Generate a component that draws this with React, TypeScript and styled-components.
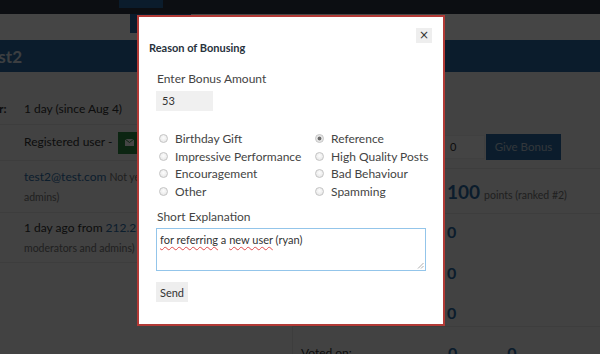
import React from "react";
import styled, { createGlobalStyle } from "styled-components";

const GlobalStyle = createGlobalStyle`
  html, body {
    margin: 0;
    padding: 0;
    width: 600px;
    height: 354px;
    overflow: hidden;
    background: #f2f2f2;
    font-family: Lato, "Open Sans", "DejaVu Sans", sans-serif;
    color: #333;
  }
`;

const Page = styled.div`
  width: 600px;
  height: 354px;
  overflow: hidden;
  background: #f2f2f2;
`;

/* ---------- background page ---------- */

const TopNav = styled.div`
  height: 14px;
  background: #2c3644;
  display: flex;
  align-items: flex-start;
  padding-left: 119px;
`;

const NavTab = styled.div`
  width: 44px;
  height: 8px;
  background: #2a6aa3;
`;

const SubBar = styled.div`
  height: 26px;
  background: #fff;
  display: flex;
  align-items: flex-start;
  padding-left: 130px;
`;

const SubButton = styled.div`
  width: 61px;
  height: 19px;
  background: #2a6aa3;
`;

const Banner = styled.div`
  height: 32px;
  background: #2a6aa3;
  display: flex;
  align-items: center;
  overflow: hidden;
`;

const BannerTitle = styled.h1`
  margin: 0 0 0 -17px;
  font-size: 17px;
  font-weight: 700;
  color: #dde5ee;
  white-space: nowrap;
`;

const Content = styled.div`
  display: grid;
  grid-template-columns: 292px 308px;
  padding-top: 20px;
`;

const LeftCol = styled.div`
  display: flex;
  flex-direction: column;
`;

const RightCol = styled.div`
  display: flex;
  flex-direction: column;
  padding-top: 33px;
`;

const InfoRow = styled.div<{ $h: number }>`
  display: grid;
  grid-template-columns: 6px 1fr;
  column-gap: 18px;
  align-items: center;
  height: ${(p) => p.$h}px;
  box-sizing: border-box;
  border-bottom: 1px solid #e2e2e2;
  font-size: 12px;
  color: #333;
`;

const InfoLabel = styled.div`
  margin-left: -60px;
  width: 66px;
  white-space: nowrap;
  font-weight: 700;
`;

const InfoValue = styled.div`
  line-height: 19px;
  padding-right: 10px;
  white-space: nowrap;
`;

const Small = styled.span`
  font-size: 10.5px;
  color: #777;
`;

const Link = styled.span`
  color: #2f6fa8;
`;

const MailButton = styled.span`
  display: inline-flex;
  align-items: center;
  gap: 5px;
  vertical-align: middle;
  margin-left: 5px;
  padding: 0 7px;
  height: 22px;
  background: #2e8a43;
  color: #fff;
  font-size: 11px;
`;

const StatRow = styled.div<{ $h: number; $pad?: number; $line?: boolean }>`
  display: grid;
  grid-template-columns: 155px auto auto 1fr;
  align-items: ${(p) => (p.$pad !== undefined ? "start" : "center")};
  padding-top: ${(p) => p.$pad ?? 0}px;
  height: ${(p) => p.$h}px;
  box-sizing: border-box;
  border-bottom: 1px solid ${(p) => (p.$line ? "#e0e0e0" : "transparent")};
  font-size: 12px;
  line-height: 20px;
`;

const StatLabel = styled.div`
  padding-left: 8px;
  color: #333;
`;

const StatNum = styled.span<{ $big?: boolean }>`
  font-size: ${(p) => (p.$big ? 19 : 16)}px;
  font-weight: 700;
  color: #2a6aa3;
  margin-right: 4px;
`;

const BonusInput = styled.div`
  margin-left: -8px;
  width: 46px;
  height: 24px;
  background: #fafafa;
  border: 1px solid #ececec;
  box-sizing: border-box;
  font-size: 11px;
  line-height: 22px;
  padding-left: 10px;
  margin-right: 1px;
`;

const GiveButton = styled.div`
  width: 75px;
  height: 26px;
  background: #2a6aa3;
  color: #b8c8d8;
  font-size: 11.5px;
  display: flex;
  align-items: center;
  justify-content: center;
`;

const BottomStats = styled.div`
  border-left: 1px solid #e0e0e0;
`;

const StatPair = styled.div`
  display: flex;
  gap: 46px;
`;

/* ---------- modal ---------- */

const Overlay = styled.div`
  position: fixed;
  inset: 0;
  background: rgba(0, 0, 0, 0.73);
`;

const Modal = styled.div`
  position: fixed;
  left: 137px;
  top: 15px;
  width: 308px;
  height: 311px;
  box-sizing: border-box;
  background: #fff;
  border: 2px solid #b23a36;
`;

const ModalHeader = styled.div`
  position: relative;
  padding: 24px 12px 0 10px;
`;

const ModalTitle = styled.h4`
  margin: 0;
  font-size: 11px;
  line-height: 14px;
  font-weight: 700;
  color: #28323d;
`;

const CloseButton = styled.button`
  position: absolute;
  top: 11px;
  right: 11px;
  width: 16px;
  height: 15px;
  padding: 0;
  border: none;
  background: #eee;
  color: #333;
  font-size: 12px;
  line-height: 15px;
  font-family: "DejaVu Sans", sans-serif;
  cursor: pointer;
`;

const ModalBody = styled.div`
  padding: 16px 17px 0 17px;
  display: flex;
  flex-direction: column;
  align-items: flex-start;
`;

const FieldLabel = styled.label`
  font-size: 12px;
  line-height: 16px;
  color: #444;
  padding-left: 1px;
`;

const AmountInput = styled.div`
  margin-top: 4px;
  width: 57px;
  height: 20px;
  box-sizing: border-box;
  background: #f0f0f0;
  font-size: 11px;
  line-height: 20px;
  padding-left: 6px;
  color: #333;
`;

const RadioGrid = styled.div`
  margin-top: 19px;
  display: grid;
  grid-template-columns: 156px auto;
  grid-auto-flow: column;
  grid-template-rows: repeat(4, 17.6px);
`;

const RadioItem = styled.label`
  display: flex;
  align-items: center;
  gap: 7px;
  padding-left: 3px;
  font-size: 12px;
  color: #444;
  white-space: nowrap;
`;

const Radio = styled.input`
  appearance: none;
  margin: 0;
  width: 9px;
  height: 9px;
  border-radius: 50%;
  border: 1px solid #c4c4c4;
  background: radial-gradient(circle at 50% 40%, #fdfdfd, #e2e2e2);
  box-sizing: border-box;

  &:checked {
    background: radial-gradient(circle, #6a6a6a 0 1.6px, #dcdcdc 2.2px, #f4f4f4 4px);
  }
`;

const ExplainLabel = styled(FieldLabel)`
  margin-top: 9px;
`;

const ExplainBox = styled.div`
  position: relative;
  margin-top: 3px;
  width: 270px;
  height: 43px;
  box-sizing: border-box;
  border: 1px solid #93c5ea;
  padding: 3px 3px;
  font-size: 11px;
  line-height: 15px;
  color: #333;
`;

const Misspelt = styled.span`
  text-decoration: underline wavy #e04a4a;
  text-decoration-thickness: 1px;
  text-underline-offset: 2px;
`;

const Grip = styled.svg`
  position: absolute;
  right: 1px;
  bottom: 1px;
`;

const SendButton = styled.button`
  margin-top: 11px;
  width: 32px;
  height: 20px;
  padding: 0;
  border: none;
  background: #eee;
  font-family: inherit;
  font-size: 11px;
  color: #333;
`;

const reasons = [
  { label: "Birthday Gift" },
  { label: "Impressive Performance" },
  { label: "Encouragement" },
  { label: "Other" },
  { label: "Reference", checked: true },
  { label: "High Quality Posts" },
  { label: "Bad Behaviour" },
  { label: "Spamming" },
];

export default function App() {
  return (
    <>
      <GlobalStyle />
      <Page>
        <TopNav>
          <NavTab />
        </TopNav>
        <SubBar>
          <SubButton />
        </SubBar>
        <Banner>
          <BannerTitle>test2</BannerTitle>
        </Banner>
        <Content>
          <LeftCol>
            <InfoRow $h={33}>
              <InfoLabel>Member for:</InfoLabel>
              <InfoValue>1 day (since Aug 4)</InfoValue>
            </InfoRow>
            <InfoRow $h={36}>
              <InfoLabel>Type:</InfoLabel>
              <InfoValue>
                Registered user -
                <MailButton>
                  <svg width="9" height="7" viewBox="0 0 9 7">
                    <rect x="0" y="0" width="9" height="7" fill="#fff" />
                    <path d="M0 0 L4.5 3.5 L9 0" stroke="#2e8a43" strokeWidth="1" fill="none" />
                  </svg>
                  Send Private Message
                </MailButton>
              </InfoValue>
            </InfoRow>
            <InfoRow $h={52}>
              <InfoLabel>Email:</InfoLabel>
              <InfoValue>
                <Link>test2@test.com</Link> <Small>Not yet confirmed (only visible to you, moderators and</Small>
                <br />
                <Small>admins)</Small>
              </InfoValue>
            </InfoRow>
            <InfoRow $h={50}>
              <InfoLabel>Last write:</InfoLabel>
              <InfoValue>
                1 day ago from <Link>212.250.21.4</Link> <Small>(only visible to</Small>
                <br />
                <Small>moderators and admins)</Small>
              </InfoValue>
            </InfoRow>
          </LeftCol>
          <RightCol>
            <StatRow $h={44} $line>
              <StatLabel>Bonus:</StatLabel>
              <BonusInput>0</BonusInput>
              <GiveButton>Give Bonus</GiveButton>
            </StatRow>
            <StatRow $h={45} $pad={13} $line>
              <StatLabel>Score:</StatLabel>
              <div>
                <StatNum $big>100</StatNum>
                <Small>points (ranked #2)</Small>
              </div>
            </StatRow>
            <StatRow $h={39} $pad={8}>
              <StatLabel>Questions:</StatLabel>
              <StatNum>0</StatNum>
            </StatRow>
            <StatRow $h={40} $pad={10}>
              <StatLabel>Answers:</StatLabel>
              <StatNum>0</StatNum>
            </StatRow>
            <StatRow $h={34} $pad={10} $line>
              <StatLabel>Comments:</StatLabel>
              <StatNum>0</StatNum>
            </StatRow>
            <BottomStats>
              <StatRow $h={52} $pad={16}>
                <StatLabel>Voted on:</StatLabel>
                <StatPair>
                  <StatNum>0</StatNum>
                  <StatNum>0</StatNum>
                </StatPair>
              </StatRow>
            </BottomStats>
          </RightCol>
        </Content>
      </Page>

      <Overlay />
      <Modal role="dialog">
        <ModalHeader>
          <ModalTitle>Reason of Bonusing</ModalTitle>
          <CloseButton aria-label="Close">×</CloseButton>
        </ModalHeader>
        <ModalBody>
          <FieldLabel>Enter Bonus Amount</FieldLabel>
          <AmountInput>53</AmountInput>
          <RadioGrid>
            {reasons.map((r) => (
              <RadioItem key={r.label}>
                <Radio type="radio" name="reason" defaultChecked={r.checked} />
                {r.label}
              </RadioItem>
            ))}
          </RadioGrid>
          <ExplainLabel>Short Explanation</ExplainLabel>
          <ExplainBox>
            <Misspelt>for referring</Misspelt> a <Misspelt>new user</Misspelt> (ryan)
            <Grip width="7" height="7" viewBox="0 0 7 7">
              <path d="M6.5 1 L1 6.5 M6.5 4 L4 6.5" stroke="#999" strokeWidth="0.8" />
            </Grip>
          </ExplainBox>
          <SendButton>Send</SendButton>
        </ModalBody>
      </Modal>
    </>
  );
}
